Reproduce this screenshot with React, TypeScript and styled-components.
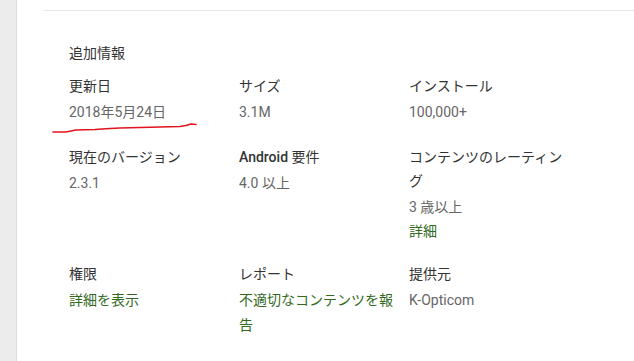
import React from "react";
import styled, { createGlobalStyle } from "styled-components";

const GlobalStyle = createGlobalStyle`
    html, body {
        margin: 0;
        padding: 0;
        background: #ffffff;
    }
    body {
        font-family: Roboto, "Noto Sans CJK JP", sans-serif;
        -webkit-font-smoothing: antialiased;
    }
`;

interface IInfoItem {
    label: React.ReactNode;
    values: { text: string; link?: boolean }[];
}

const items: IInfoItem[] = [
    { label: "更新日", values: [{ text: "2018年5月24日" }] },
    { label: "サイズ", values: [{ text: "3.1M" }] },
    { label: "インストール", values: [{ text: "100,000+" }] },
    { label: "現在のバージョン", values: [{ text: "2.3.1" }] },
    { label: <><b>Android</b> 要件</>, values: [{ text: "4.0 以上" }] },
    { label: "コンテンツのレーティング", values: [{ text: "3 歳以上" }, { text: "詳細", link: true }] },
    { label: "権限", values: [{ text: "詳細を表示", link: true }] },
    { label: "レポート", values: [{ text: "不適切なコンテンツを報告", link: true }] },
    { label: "提供元", values: [{ text: "K-Opticom" }] },
];

const Page = styled.div`
    display: flex;
    width: 634px;
    height: 361px;
    overflow: hidden;
    background: #ffffff;
`;

const SideStrip = styled.div`
    width: 16px;
    flex-shrink: 0;
    background: #ececec;
    border-right: 1px solid #dcdcdc;
`;

const Panel = styled.div`
    flex: 1;
    padding: 10px 0 0 26px;
`;

const Divider = styled.div`
    height: 1px;
    background: #e8e8e8;
`;

const Section = styled.section`
    position: relative;
    padding: 30px 0 0 26px;
`;

const Heading = styled.h2`
    margin: 0 0 9px;
    font-size: 14px;
    font-weight: 400;
    line-height: 24px;
    color: #333333;
`;

const Grid = styled.div`
    display: grid;
    grid-template-columns: repeat(3, 170px);
    row-gap: 20px;
`;

const Cell = styled.div`
    width: 160px;
    font-size: 14px;
`;

const Label = styled.div`
    line-height: 24px;
    color: #333333;

    b {
        font-weight: 500;
    }
`;

const Value = styled.div<{ $link?: boolean; $first?: boolean }>`
    line-height: ${(p) => (p.$first ? "25px" : "22px")};
    margin-top: ${(p) => (p.$first ? "2px" : "0")};
    color: ${(p) => (p.$link ? "#33691e" : "#666666")};
    cursor: ${(p) => (p.$link ? "pointer" : "default")};
`;

const Scribble = styled.svg`
    position: absolute;
    left: 0;
    top: 0;
    pointer-events: none;
`;

export default function App() {
    return (
        <Page>
            <GlobalStyle />
            <SideStrip />
            <Panel>
                <Divider />
                <Section>
                    <Heading>追加情報</Heading>
                    <Grid>
                        {items.map((item, i) => (
                            <Cell key={i}>
                                <Label>{item.label}</Label>
                                {item.values.map((v, j) => (
                                    <Value key={j} $link={v.link} $first={j === 0}>{v.text}</Value>
                                ))}
                            </Cell>
                        ))}
                    </Grid>
                    <Scribble width="200" height="40" viewBox="0 0 200 40" style={{ left: -43, top: 100 }}>
                        <path
                            d="M53 21 L66 21 L76 19 L95 18.5 L110 17.5 L120 17 L140 16.5 L160 16 L180 15.5 L186 14.5 L191 13 L196 13.5"
                            fill="none"
                            stroke="#e0141e"
                            strokeWidth="1.6"
                            strokeLinecap="round"
                            strokeLinejoin="round"
                        />
                    </Scribble>
                </Section>
            </Panel>
        </Page>
    );
}
